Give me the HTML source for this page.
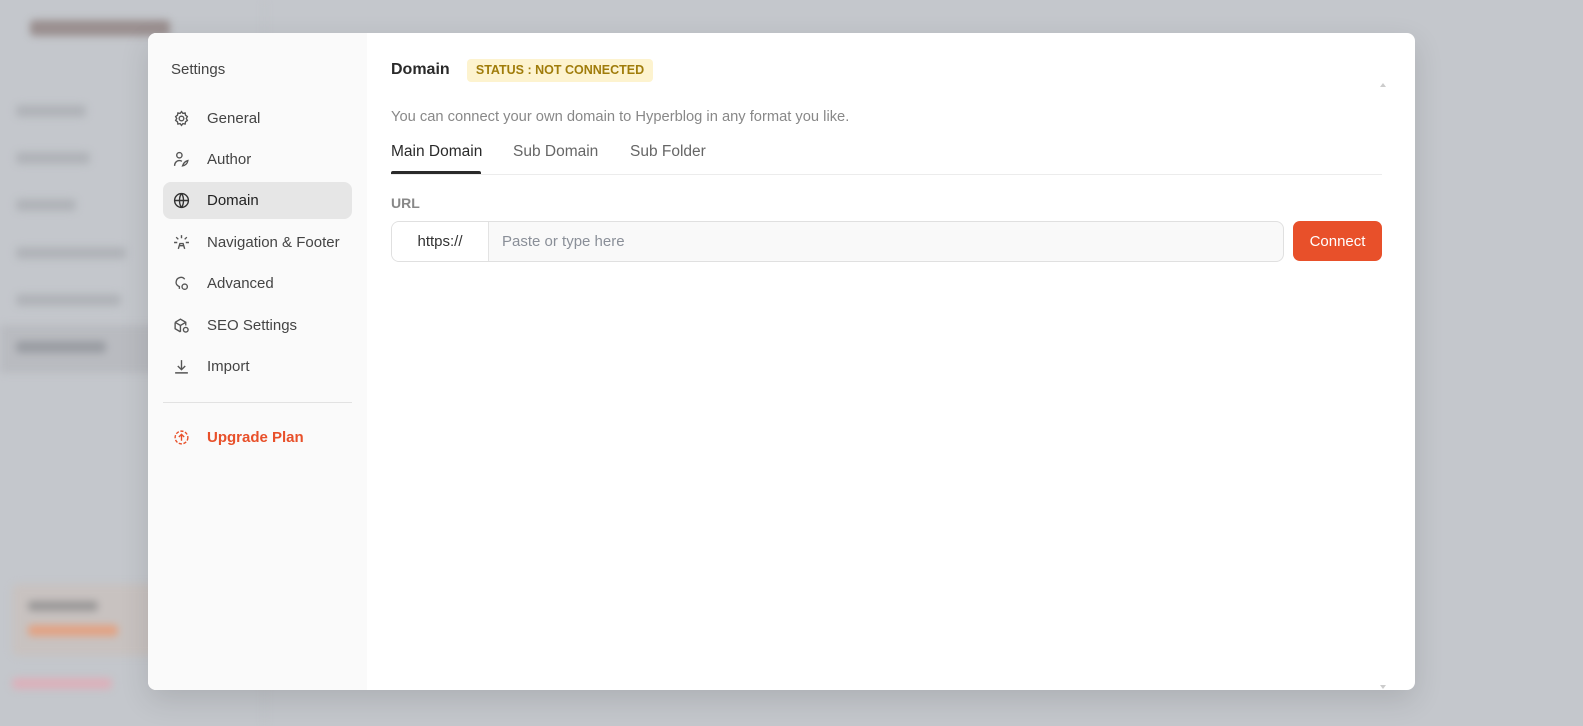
<!DOCTYPE html>
<html><head><style>
*{box-sizing:border-box;margin:0;padding:0}
body{width:1583px;height:726px;overflow:hidden;background:#c4c7cc;font-family:"Liberation Sans",sans-serif;position:relative}
.bg{position:absolute;left:0;top:0;width:265px;height:726px;border-right:1px solid #babdc2;filter:blur(4px)}
.bg div{position:absolute;left:16px;height:12px;background:#b0b3b8;border-radius:4px}
.modal{position:absolute;left:148px;top:33px;width:1267px;height:657px;background:#fff;border-radius:8px;overflow:hidden;box-shadow:0 10px 30px rgba(0,0,0,.12)}
.side{position:absolute;left:0;top:0;width:219px;height:100%;background:#fafafa}
.side h3{position:absolute;left:23px;top:28px;font-size:15px;font-weight:normal;color:#444}
.item{position:absolute;left:15px;width:189px;height:37px;border-radius:8px;font-size:15px;color:#444;display:flex;align-items:center}
.item svg{position:absolute;left:10px;width:17px;height:17px;fill:none;stroke:#555;stroke-width:1.3}
.item span{position:absolute;left:44px}
.item.act{background:#e6e6e6;color:#222}
.main{position:absolute;left:243px;top:0;right:33px}
</style></head><body>
<div class="bg">
<div style="left:30px;top:20px;width:140px;height:16px;background:#9a8f8f"></div>
<div style="top:105px;width:70px"></div><div style="top:152px;width:74px"></div><div style="top:199px;width:60px"></div><div style="top:247px;width:110px"></div><div style="top:294px;width:105px"></div>
<div style="left:0;top:325px;width:265px;height:48px;background:#b9bbc0;border-radius:0"></div>
<div style="top:341px;width:90px;background:#9a9da3"></div>
<div style="left:12px;top:584px;width:250px;height:72px;background:#c8c2c0;border-radius:6px"></div>
<div style="left:28px;top:601px;width:70px;height:10px;background:#9a9898"></div>
<div style="left:28px;top:625px;width:90px;height:11px;background:#e3a282"></div>
<div style="left:12px;top:678px;width:100px;height:11px;background:#dcb0ba"></div>
</div>
<div class="modal">
<div class="side">
<h3>Settings</h3>
<div class="item" style="top:67px"><svg viewBox="0 0 16 16"><circle cx="8" cy="8" r="2.2"/><path d="M8 1.5l1.3 1.7 2.1-.4.4 2.1 1.7 1.3-1 1.8 1 1.8-1.7 1.3-.4 2.1-2.1-.4L8 14.5l-1.3-1.7-2.1.4-.4-2.1L2.5 9.8l1-1.8-1-1.8 1.7-1.3.4-2.1 2.1.4z"/></svg><span>General</span></div>
<div class="item" style="top:108px"><svg viewBox="0 0 16 16"><circle cx="6" cy="4" r="2.5"/><path d="M1.5 14c0-3 2-5 4.5-5 1 0 1.8.3 2.4.7M9 14c1-3 3-4.5 5-5-.5 3-2.5 4.5-5 5z"/></svg><span>Author</span></div>
<div class="item act" style="top:149px"><svg viewBox="0 0 16 16" style="stroke:#333"><circle cx="8" cy="8" r="6.5"/><path d="M1.5 8h13M8 1.5c-2.5 3-2.5 10 0 13M8 1.5c2.5 3 2.5 10 0 13"/></svg><span>Domain</span></div>
<div class="item" style="top:191px"><svg viewBox="0 0 16 16"><path d="M8 1v3M3 3l2 2M13 3l-2 2M1 8h3M12 8h3M5 14l1.5-5 3 0L11 14M6 11h4"/></svg><span>Navigation &amp; Footer</span></div>
<div class="item" style="top:232px"><svg viewBox="0 0 16 16"><path d="M6 13V11C3.5 10 2.5 8 3 6a4.5 4.5 0 0 1 8-2"/><circle cx="11" cy="11" r="2.5"/></svg><span>Advanced</span></div>
<div class="item" style="top:274px"><svg viewBox="0 0 16 16"><path d="M2 5l5-3 5 3v3M2 5v6l5 3M2 5l5 3 5-3M7 8v6"/><circle cx="12" cy="12" r="2.2"/></svg><span>SEO Settings</span></div>
<div class="item" style="top:315px"><svg viewBox="0 0 16 16"><path d="M8 2v9M4.5 7.5L8 11l3.5-3.5M2 14h12"/></svg><span>Import</span></div>
<div style="position:absolute;left:15px;top:369px;width:189px;height:1px;background:#e2e2e2"></div>
<div class="item" style="top:386px;color:#e8502a;font-weight:bold"><svg viewBox="0 0 16 16" style="stroke:#e8502a"><circle cx="8" cy="8" r="6" stroke-dasharray="3 1.5"/><path d="M8 11V5M5.5 7.5L8 5l2.5 2.5"/></svg><span>Upgrade Plan</span></div>
</div>
<div class="main">
<div style="position:absolute;left:0;top:28px;font-size:16px;font-weight:bold;color:#2a2a2a">Domain</div>
<div style="position:absolute;left:76px;top:26px;width:186px;height:23px;background:#fdf3cf;border-radius:4px;color:#a07c0a;font-size:12.5px;font-weight:bold;text-align:center;line-height:23px">STATUS : NOT CONNECTED</div>
<div style="position:absolute;right:-4px;top:50px;width:0;height:0;border-left:3px solid transparent;border-right:3px solid transparent;border-bottom:4px solid #ccc"></div>
<div style="position:absolute;left:0;top:76px;font-size:14.7px;color:#888">You can connect your own domain to Hyperblog in any format you like.</div>
<div style="position:absolute;left:0;top:110px;font-size:15.5px;color:#2a2a2a">Main Domain</div>
<div style="position:absolute;left:122px;top:110px;font-size:15.5px;color:#666">Sub Domain</div>
<div style="position:absolute;left:239px;top:110px;font-size:15.5px;color:#666">Sub Folder</div>
<div style="position:absolute;left:0;top:141px;right:0;height:1px;background:#ececec"></div>
<div style="position:absolute;left:0;top:138px;width:90px;height:3px;background:#2a2a2a;border-radius:2px 2px 0 0"></div>
<div style="position:absolute;left:0;top:162px;font-size:14px;font-weight:bold;color:#888">URL</div>
<div style="position:absolute;left:0;top:188px;width:893px;height:41px;border:1.5px solid #e0e0e0;border-radius:8px;background:#f9f9f9;overflow:hidden">
<div style="position:absolute;left:0;top:0;width:97px;height:100%;background:#fff;border-right:1px solid #e3e3e3;font-size:15px;color:#333;text-align:center;line-height:39px">https://</div>
<div style="position:absolute;left:110px;top:0;line-height:39px;font-size:15px;color:#8a8f98">Paste or type here</div>
</div>
<div style="position:absolute;left:902px;top:188px;width:89px;height:40px;background:#e8502a;border-radius:7px;color:#fff;font-size:15px;display:flex;align-items:center;justify-content:center">Connect</div>
<div style="position:absolute;right:-4px;top:652px;width:0;height:0;border-left:3px solid transparent;border-right:3px solid transparent;border-top:4px solid #ccc"></div>
</div>
</div>
</body></html>
